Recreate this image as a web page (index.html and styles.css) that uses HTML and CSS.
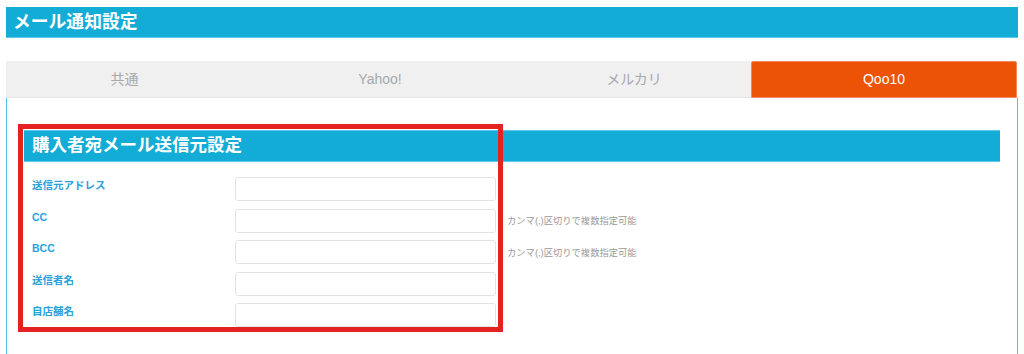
FILE: index.html
```html
<!DOCTYPE html>
<html lang="ja">
<head>
    <meta charset="UTF-8">
    <meta name="viewport" content="width=device-width, initial-scale=1.0">
    <title>メール通知設定</title>
    <link rel="stylesheet" href="styles.css">
</head>
<body>
    <div class="page-title">メール通知設定</div>

    <ul class="tabs">
        <li class="tab">共通</li>
        <li class="tab">Yahoo!</li>
        <li class="tab">メルカリ</li>
        <li class="tab active">Qoo10</li>
    </ul>

    <div class="panel">
        <div class="section">
            <div class="section-title">購入者宛メール送信元設定</div>
            <div class="form">
                <div class="row">
                    <label class="label">送信元アドレス</label>
                    <input type="text" class="field">
                </div>
                <div class="row">
                    <label class="label">CC</label>
                    <input type="text" class="field">
                    <span class="help">カンマ(,)区切りで複数指定可能</span>
                </div>
                <div class="row">
                    <label class="label">BCC</label>
                    <input type="text" class="field">
                    <span class="help">カンマ(,)区切りで複数指定可能</span>
                </div>
                <div class="row">
                    <label class="label">送信者名</label>
                    <input type="text" class="field">
                </div>
                <div class="row">
                    <label class="label">自店舗名</label>
                    <input type="text" class="field">
                </div>
            </div>
            <div class="highlight"></div>
        </div>
    </div>
</body>
</html>
```

FILE: styles.css
```css
* {
    margin: 0;
    padding: 0;
    box-sizing: border-box;
    font-family: "Liberation Sans", "Noto Sans CJK JP", sans-serif;
}
body {
    background: #fff;
    padding: 7px 6px 0 6px;
}
.page-title {
    background: #12acd6;
    border-bottom: 1px solid #5cc9ea;
    color: #fff;
    font-size: 17.8px;
    font-weight: bold;
    height: 31px;
    line-height: 30px;
    padding-left: 7px;
}
.tabs {
    list-style: none;
    display: grid;
    grid-template-columns: 237fr 274fr 234fr 266fr;
    margin-top: 23px;
    margin-right: 1px;
}
.tab {
    background: #f0f0f0;
    border-bottom: 1px solid #e6e6e6;
    color: #a8a8a8;
    font-size: 14px;
    height: 37px;
    line-height: 36px;
    text-align: center;
}
.tab.active {
    background: #ec5306;
    border: 1px solid #f08a5a;
    border-radius: 2px 2px 0 0;
    color: #fff;
    line-height: 34px;
}
.panel {
    border-left: 1px solid #4fc3e8;
    border-right: 1px solid #4fc3e8;
    padding: 32px 17px 19px 17px;
}
.section {
    position: relative;
}
.section-title {
    background: #12acd6;
    border-top: 1px solid #5cc9ea;
    border-bottom: 1px solid #5cc9ea;
    color: #fff;
    font-size: 17.5px;
    font-weight: bold;
    height: 32px;
    line-height: 29px;
    padding-left: 8px;
}
.form {
    padding-top: 15px;
}
.row {
    display: flex;
    align-items: flex-start;
    height: 23px;
    margin-bottom: 8.5px;
}
.label {
    width: 211px;
    padding-left: 8px;
    padding-top: 3px;
    color: #2aa2dc;
    font-size: 10.5px;
    font-weight: bold;
    line-height: 1;
}
.field {
    width: 261px;
    height: 24px;
    border: 1px solid #e2e2e2;
    border-radius: 3px;
    background: #fff;
    outline: none;
}
.help {
    align-self: center;
    margin-left: 11px;
    color: #9a9a9a;
    font-size: 9.3px;
}
/* annotation frame drawn over the form */
.highlight {
    position: absolute;
    left: -6px;
    top: -6px;
    width: 485px;
    height: 208px;
    border: 5px solid #e42222;
}
```
